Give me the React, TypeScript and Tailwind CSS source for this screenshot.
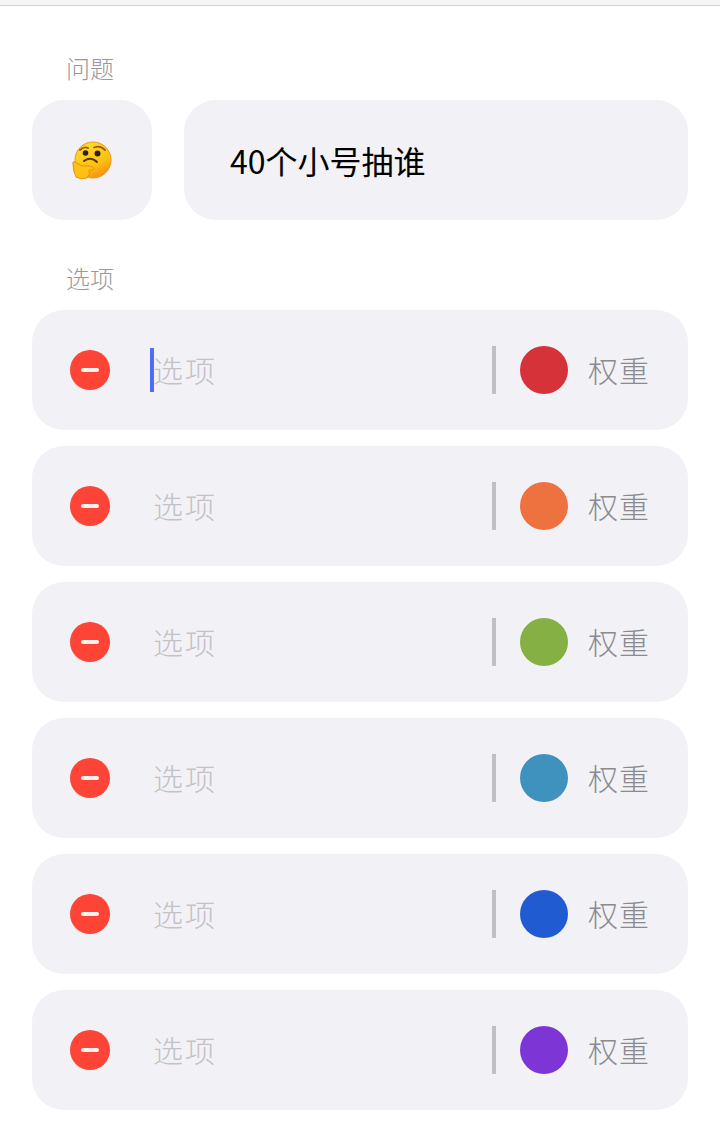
import React from "react";

const options = ["#d63239", "#ee7240", "#84b044", "#3e92bd", "#205bd2", "#7e35d6"];

const fontCls = "font-['Noto_Sans_CJK_SC','Noto_Sans',sans-serif]";

// thinking face, drawn because no colour emoji font is available
const ThinkingFace = () => (
  <svg width="40" height="40" viewBox="0 0 40 40">
    <defs>
      <linearGradient id="face" x1="30%" y1="5%" x2="75%" y2="100%">
        <stop offset="0%" stopColor="#ffd92e" />
        <stop offset="60%" stopColor="#fdc010" />
        <stop offset="100%" stopColor="#f58a16" />
      </linearGradient>
    </defs>
    <circle cx="21" cy="19" r="18" fill="url(#face)" stroke="#eb9a10" strokeWidth="1" />
    <path d="M8 9 Q12 5 16 7" fill="none" stroke="#9c5a14" strokeWidth="1.8" strokeLinecap="round" />
    <path d="M22 6.5 Q28 4 33 9" fill="none" stroke="#9c5a14" strokeWidth="1.8" strokeLinecap="round" />
    <circle cx="13.5" cy="12" r="2.8" fill="#2e2216" />
    <circle cx="25.5" cy="12.5" r="3" fill="#2e2216" />
    <path d="M12 20 Q19 15 25 21" fill="none" stroke="#5f3410" strokeWidth="2" strokeLinecap="round" />
    <path
      d="M1 23 Q0 20 3 21 L10 25 Q16 24 21 26 Q23 29 19 29 L17 29 Q19 33 15 37 Q9 39 4 36 Q1 30 1 23 Z"
      fill="#fdc013"
      stroke="#e8920f"
      strokeWidth="1"
    />
  </svg>
);

const OptionRow = ({ color, active }: { color: string; active: boolean }) => (
  <div className="h-[120px] rounded-[32px] bg-[#f2f2f6] flex items-center pl-[38px] pr-[38px]">
    <div className="w-10 h-10 rounded-full bg-[#fd4436] flex items-center justify-center">
      <div className="w-[18px] h-1 rounded-sm bg-[#fff1ec]" />
    </div>
    <div className="flex-1 flex items-center ml-10 h-11">
      <div className={active ? "w-1 h-11 bg-[#4f6ef5] -mr-px" : "w-1 h-11 -mr-px"} />
      <span className="text-[30px] leading-none tracking-[2px] font-light text-[#c2c2c7] pb-[3px]">选项</span>
    </div>
    <div className="w-1 h-12 bg-[#c1c1c5]" />
    <div className="w-12 h-12 rounded-full ml-6" style={{ backgroundColor: color }} />
    <span className="ml-5 text-[30px] leading-none tracking-[1px] font-light text-[#8a8a8f] pb-[3px]">权重</span>
  </div>
);

export default function App() {
  return (
    <div className={`w-[720px] h-[1123px] bg-white ${fontCls}`}>
      <div className="h-[6px] bg-[#f6f6f6] border-b border-[#d2d2d2]" />
      <div className="px-8">
        <div className="mt-[50px] pl-[34px] h-6 text-2xl leading-6 font-light text-[#98989c]">问题</div>
        <div className="flex gap-8 mt-5">
          <div className="w-[120px] h-[120px] rounded-[32px] bg-[#f2f2f6] flex items-center justify-center pt-[2px]">
            <ThinkingFace />
          </div>
          <div className="flex-1 h-[120px] rounded-[32px] bg-[#f2f2f6] flex items-center pl-[46px]">
            <span className="text-[32px] leading-none text-black">40个小号抽谁</span>
          </div>
        </div>
        <div className="mt-[46px] pl-[34px] h-6 text-2xl leading-6 font-light text-[#98989c]">选项</div>
        <div className="flex flex-col gap-4 mt-5">
          {options.map((c, i) => (
            <OptionRow key={c} color={c} active={i === 0} />
          ))}
        </div>
      </div>
    </div>
  );
}
